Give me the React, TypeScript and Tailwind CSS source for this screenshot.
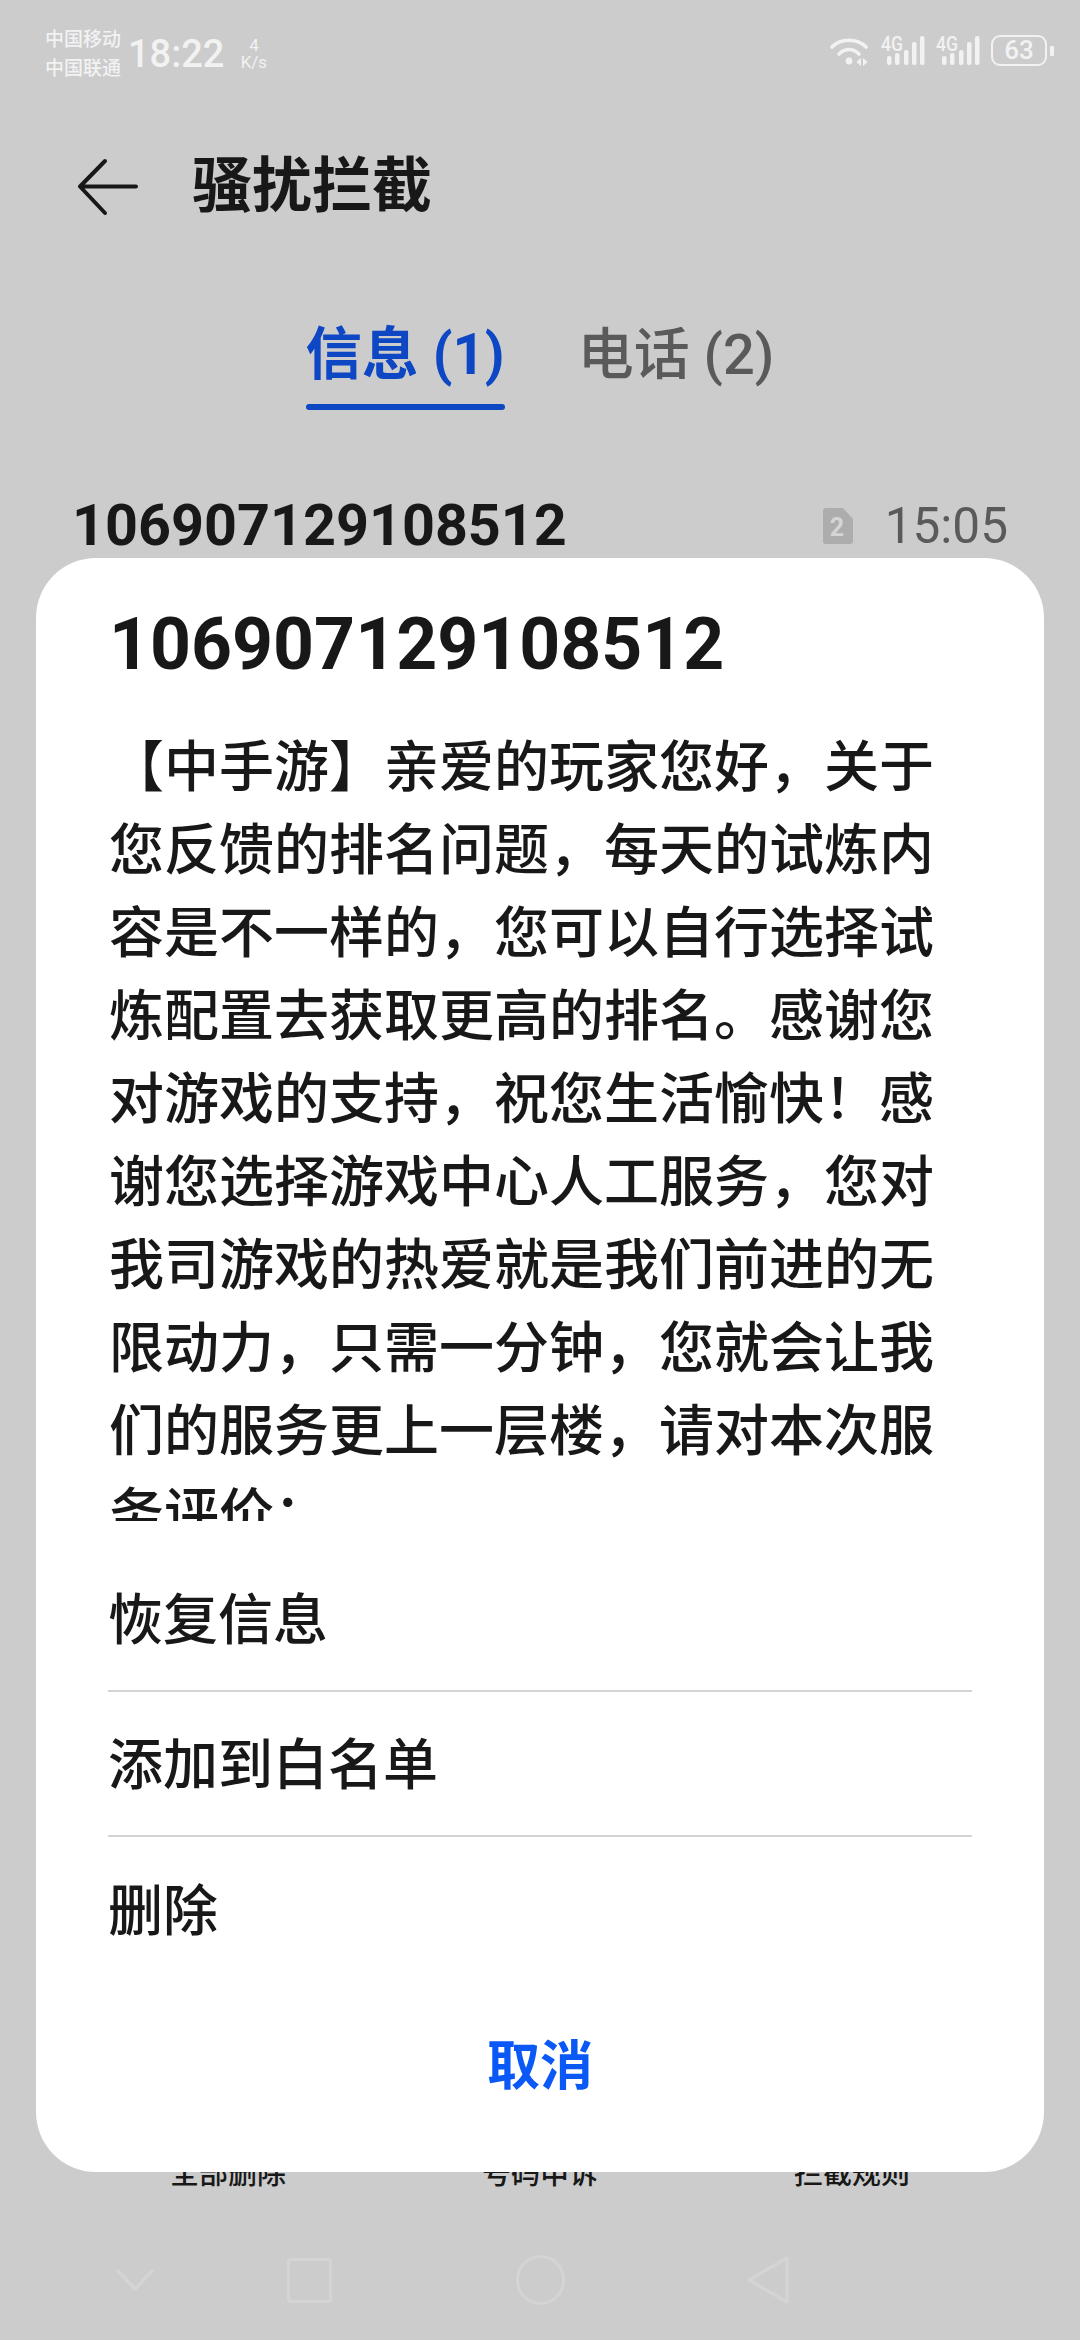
const sans = "font-['Roboto','Noto_Sans_CJK_SC',sans-serif]";

function Signal() {
    return (
        <svg width="44" height="30" viewBox="0 0 44 30" fill="#f2f2f2" className="shrink-0 overflow-visible">
            <text x="0" y="15" fontSize="20" textLength="22" lengthAdjust="spacingAndGlyphs" fontFamily="Roboto, sans-serif" fontWeight="500">4G</text>
            <rect x="6" y="20" width="4.500" height="9" rx="2" />
            <rect x="14" y="17" width="4.500" height="12" rx="2" />
            <rect x="23" y="14" width="4.500" height="15" rx="2" />
            <rect x="31" y="6" width="4.500" height="23" rx="2" />
            <rect x="39" y="0" width="4.500" height="29" rx="2" />
        </svg>
    );
}

function StatusBar() {
    return (
        <div className="flex h-[143px] shrink-0 items-start justify-between pl-[45px] pr-[26px] pt-[25px] text-[#f2f2f2]">
            <div className="flex items-center">
                <div className="flex w-[83px] flex-col text-[19px] leading-[29px] font-medium whitespace-nowrap">
                    <span>中国移动</span>
                    <span>中国联通</span>
                </div>
                <span className="text-[38px] leading-[50px] font-medium">18:22</span>
                <div className="ml-[16px] flex w-[27px] flex-col items-center text-[17px] leading-[17px]">
                    <span>4</span>
                    <span>K/s</span>
                </div>
            </div>
            <div className="flex items-center gap-[11px] pt-[10px]">
                <svg width="40" height="30" viewBox="0 0 40 30" fill="none" stroke="#f2f2f2" strokeWidth="3.600" strokeLinecap="round">
                    <path d="M2 11C11 2 27 2 36 11" />
                    <path d="M9 18C15 12 23 12 29 18" />
                    <circle cx="19" cy="25" r="3.400" fill="#f2f2f2" stroke="none" />
                    <path d="M31 22L26.500 26L31 30Z M33 22L37.500 26L33 30Z" fill="#f2f2f2" stroke="none" />
                </svg>
                <Signal />
                <Signal />
                <div className="flex items-center gap-[3px]">
                    <div className="flex h-[31px] w-[56px] items-center justify-center rounded-[9px] border-[2.5px] border-[#f2f2f2] text-[26px] font-medium">
                        63
                    </div>
                    <div className="h-[10px] w-[4px] rounded-[1px] bg-[#f2f2f2]" />
                </div>
            </div>
        </div>
    );
}

function NavBar() {
    return (
        <div className="flex h-[84px] shrink-0 items-center pl-[116px]">
            <svg width="38" height="22" viewBox="0 0 38 22" fill="none" stroke="#d4d4d4" strokeWidth="3.500" strokeLinejoin="round" strokeLinecap="round" className="shrink-0">
                <path d="M2 2L19 20L36 2" />
            </svg>
            <div className="ml-[133px] h-[45px] w-[45px] shrink-0 rounded-[3px] border-[3.5px] border-[#d4d4d4]" />
            <div className="ml-[184px] h-[50px] w-[49px] shrink-0 rounded-full border-[3.5px] border-[#d4d4d4]" />
            <svg width="42" height="48" viewBox="0 0 42 48" fill="none" stroke="#d4d4d4" strokeWidth="3.500" strokeLinejoin="round" className="ml-[182px] shrink-0">
                <path d="M40 2V46L2 24Z" />
            </svg>
        </div>
    );
}

function Sheet() {
    const actions = ["恢复信息", "添加到白名单", "删除"];
    return (
        <div className="absolute top-[558px] left-[36px] flex h-[1614px] w-[1008px] flex-col rounded-[60px] bg-white text-[#181818]">
            <div className="pt-[46px] pl-[73px] text-[71.5px] leading-[82px] font-bold">106907129108512</div>
            <div className="mt-[40px] h-[795px] overflow-hidden pl-[73px] text-[55px] leading-[83px] font-medium">
                <p className="w-[830px]">
                    【中手游】亲爱的玩家您好，关于您反馈的排名问题，每天的试炼内容是不一样的，您可以自行选择试炼配置去获取更高的排名。感谢您对游戏的支持，祝您生活愉快！感谢您选择游戏中心人工服务，您对我司游戏的热爱就是我们前进的无限动力，只需一分钟，您就会让我们的服务更上一层楼，请对本次服务评价：
                </p>
            </div>
            <div className="mt-[26px] ml-[72px] w-[864px]">
                {actions.map((label, i) => (
                    <div key={label} className={`flex h-[145px] items-center pt-[4px] text-[55px] font-medium ${i < 2 ? "border-b-2 border-[#d4d4d4]" : ""}`}>
                        {label}
                    </div>
                ))}
            </div>
            <div className="mt-[50px] text-center text-[53px] leading-[70px] font-bold text-[#0a59f7]">取消</div>
        </div>
    );
}

export default function App() {
    return (
        <div className={`relative flex h-[2340px] w-[1080px] flex-col overflow-hidden bg-[#cccccc] ${sans}`}>
            <StatusBar />

            <div className="flex h-[88px] shrink-0 items-center pl-[76px] text-[#181818]">
                <svg width="64" height="58" viewBox="0 0 64 58" fill="none" stroke="#181818" strokeWidth="4" strokeLinecap="round" strokeLinejoin="round" className="shrink-0">
                    <path d="M29 3L4 28.500L29 55M4 28.500H60" />
                </svg>
                <h1 className="ml-[52px] text-[60px] font-bold">骚扰拦截</h1>
            </div>

            <div className="mt-[79px] flex shrink-0 justify-center gap-[73px]">
                <div className="flex flex-col items-center text-[#0d47c4]">
                    <span className="text-[56.5px] leading-[90px] font-bold">信息 (1)</span>
                    <span className="mt-[4px] h-[6px] w-full rounded-full bg-[#0d47c4]" />
                </div>
                <span className="text-[56px] leading-[90px] font-medium text-[#5a5a5a]">电话 (2)</span>
            </div>

            <div className="mt-[81px] flex shrink-0 items-center justify-between pr-[72px] pl-[72px]">
                <span className="text-[57.5px] leading-[70px] font-bold text-[#181818]">106907129108512</span>
                <div className="flex items-center gap-[32px]">
                    <svg width="30" height="36" viewBox="0 0 30 36">
                        <path d="M3 0H20L30 11V33Q30 36 27 36H3Q0 36 0 33V3Q0 0 3 0Z" fill="#adadad" />
                        <text x="14" y="28" textAnchor="middle" fontSize="25" fontWeight="700" fill="#d5d5d5" fontFamily="Roboto, sans-serif">2</text>
                    </svg>
                    <span className="text-[49.5px] leading-[70px] text-[#5a5a5a]">15:05</span>
                </div>
            </div>

            <div className="flex-1" />

            <div className="flex shrink-0 justify-around px-[72px] text-[29px] leading-[40px] font-medium text-[#181818]">
                <span>全部删除</span>
                <span>号码申诉</span>
                <span>拦截规则</span>
            </div>
            <div className="h-[44px] shrink-0" />
            <NavBar />
            <div className="h-[18px] shrink-0" />

            <Sheet />
        </div>
    );
}
